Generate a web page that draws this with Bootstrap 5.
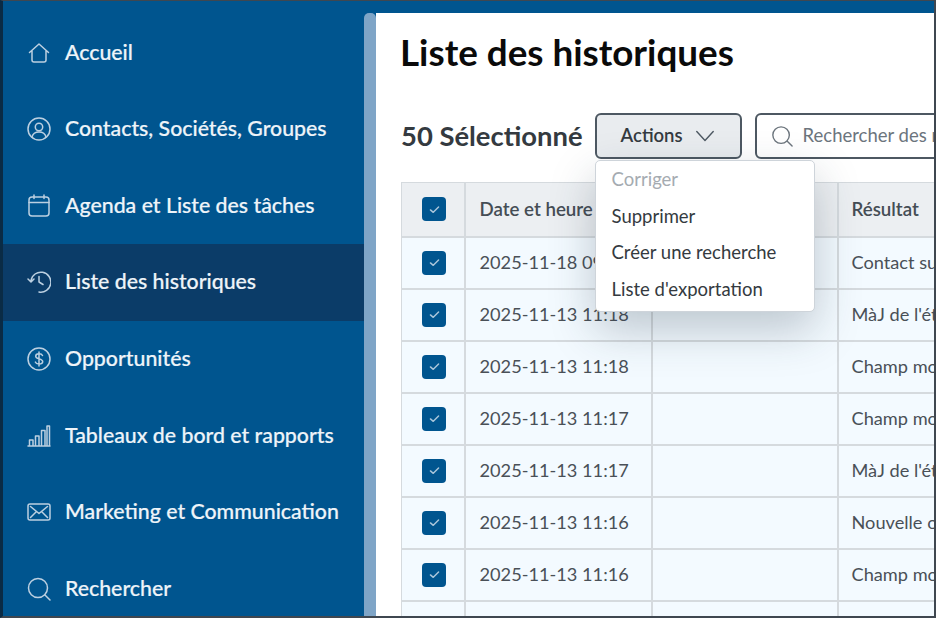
<!DOCTYPE html>
<html lang="fr">
<head>
    <meta charset="UTF-8">
    <meta name="viewport" content="width=device-width, initial-scale=1.0">
    <title>Liste des historiques</title>
    <link rel="stylesheet" href="https://cdn.jsdelivr.net/npm/bootstrap@5.3.0/dist/css/bootstrap.min.css">
    <style>
        html, body { height: 100%; overflow: hidden; }
        body { font-family: Lato, "Liberation Sans", sans-serif; background: #fff; }
        .app-frame { width: 936px; height: 618px; overflow: hidden; border-style: solid; border-width: 1px 2px 2px 3px; border-color: #3f4750 #3f4750 #3f4750 #0a2b45; }
        .side-panel { width: 361px; flex: none; background: #00558f; padding-top: 13.3px; }
        .side-link { height: 76.6px; flex: none; padding: 0 0 0 24px; gap: 14px; color: #eef4f9; font-size: 21.3px; font-weight: 500; -webkit-text-stroke: .2px #eef4f9; }
        .side-link:hover, .side-link:focus { color: #eef4f9; }
        .side-link.is-current { background: #0b3c68; }
        .side-link svg { width: 24px; height: 24px; flex: none; fill: none; stroke: #bcd0e1; stroke-width: 1.5; stroke-linecap: round; stroke-linejoin: round; }
        .scroll-strip { width: 12px; flex: none; background: #00558f; }
        .scroll-strip div { height: 100%; margin-top: 12px; background: #7fa5c7; border-radius: 5px 5px 0 0; }
        .main-pane { flex: 1; min-width: 0; overflow: hidden; border-top: 12px solid #00558f; padding-left: 25px; }
        .page-title { font-size: 36.8px; font-weight: 700; color: #0a0a0a; margin: 0 0 0 -1px; line-height: 44px; padding-top: 17px; }
        .tool-row { margin-top: 39px; height: 46px; gap: 13px; }
        .sel-count { font-size: 27.4px; font-weight: 700; color: #343a40; margin-right: -1px; white-space: nowrap; }
        .btn-actions { width: 147px; height: 46px; background: #e9ecef; border: 2px solid #4d5862; border-radius: 6px; color: #343a40; font-size: 18.5px; font-weight: 600; gap: 11px; padding: 0; }
        .btn-actions svg { width: 22px; height: 22px; fill: none; stroke: #4d5862; stroke-width: 1.5; stroke-linecap: round; stroke-linejoin: round; }
        .actions-menu { top: 100%; left: 0; margin-top: 1px !important; width: 220px; padding: 0 0 3px; border: 1px solid #ced4da; border-radius: 5px; box-shadow: 0 18px 45px rgba(33, 53, 71, .26); font-size: 18.5px; }
        .actions-menu .dropdown-item { height: 36.7px; display: flex; align-items: center; padding: 1px 16px 0; color: #343a40; }
        .actions-menu .dropdown-item.disabled { color: #a5abb1; }
        .search-box { width: 400px; height: 46px; flex: none; border: 2px solid #4d5862; border-radius: 6px; gap: 10px; padding-left: 14px; background: #fff; color: #6c757d; font-size: 18.5px; white-space: nowrap; }
        .search-box svg { width: 22px; height: 22px; flex: none; fill: none; stroke: #6c757d; stroke-width: 1.5; stroke-linecap: round; }
        .history-table { width: 800px; table-layout: fixed; margin: 23px 0 0; border-color: #d5dade; font-size: 18.2px; }
        .history-table > :not(caption) > * > * { padding: 0 14px 0 13px; height: 52px; vertical-align: middle; color: #495057; background: #f3faff; border-width: 1px 2px 2px 1px; white-space: nowrap; overflow: hidden; }
        .history-table > thead > tr > th { height: 54px; background: #eceff2; font-size: 18.7px; font-weight: 600; color: #454d55; }
        .history-table .col-check { width: 63px; padding: 0 0 0 3px; }
        .history-table td:nth-child(2), .history-table th:nth-child(2) { padding-left: 14px; }
        .tick-box { display: flex; align-items: center; justify-content: center; width: 24px; height: 24px; margin: auto; background: #00558f; border-radius: 4px; }
        .tick-box svg { width: 13px; height: 13px; fill: none; stroke: #a9c5da; stroke-width: 1.8; stroke-linecap: round; stroke-linejoin: round; }
    </style>
</head>
<body>
<div class="app-frame d-flex">

    <!-- Sidebar -->
    <nav class="side-panel nav flex-column flex-nowrap">
        <a class="nav-link side-link d-flex align-items-center" href="#">
            <svg viewBox="0 0 24 24"><path d="M2.5 11.5 12 3l9.500 8.500M5 9.500V19a2 2 0 0 0 2 2h10a2 2 0 0 0 2-2V9.500"/></svg>Accueil
        </a>
        <a class="nav-link side-link d-flex align-items-center" href="#">
            <svg viewBox="0 0 24 24"><circle cx="12" cy="12" r="11"/><circle cx="12" cy="10" r="3.700"/><path d="M5 20c.8-3.500 3-5 7-5s6.200 1.500 7 5"/></svg>Contacts, Sociétés, Groupes
        </a>
        <a class="nav-link side-link d-flex align-items-center" href="#">
            <svg viewBox="0 0 24 24"><rect x="2" y="3" width="20" height="19" rx="3"/><path d="M2 8.500h20M7 1v3.500M17 1v3.500"/></svg>Agenda et Liste des tâches
        </a>
        <a class="nav-link side-link is-current d-flex align-items-center" href="#">
            <svg viewBox="0 0 24 24"><path d="M4 10.500A10 10 0 1 1 12 22M1 9l3 3 3-3M12 6.500V12l4 2.500"/></svg>Liste des historiques
        </a>
        <a class="nav-link side-link d-flex align-items-center" href="#">
            <svg viewBox="0 0 24 24"><circle cx="12" cy="12" r="11"/><path d="M15.500 8.500c-.5-1.200-1.700-1.800-3.500-1.800-2 0-3.300 1-3.300 2.500 0 3.500 7 1.800 7 5.400 0 1.500-1.500 2.500-3.700 2.500-1.800 0-3.200-.7-3.700-2M12 5v14"/></svg>Opportunités
        </a>
        <a class="nav-link side-link d-flex align-items-center" href="#">
            <svg viewBox="0 0 24 24"><path d="M1 22h22M2.500 22v-6h3.500v6M8.500 22V12H12v10M14.500 22V6.500H18V22M20 22V2h2.500v20"/></svg>Tableaux de bord et rapports
        </a>
        <a class="nav-link side-link d-flex align-items-center" href="#">
            <svg viewBox="0 0 24 24"><rect x="1" y="4" width="22" height="16" rx="2"/><path d="m3.500 6.500 8.500 7 8.500-7M3.500 17.500l5.500-5.500M20.500 17.500 15 12"/></svg>Marketing et Communication
        </a>
        <a class="nav-link side-link d-flex align-items-center" href="#">
            <svg viewBox="0 0 24 24"><circle cx="11" cy="11" r="9.500"/><path d="m18 18 5 5"/></svg>Rechercher
        </a>
    </nav>
    <div class="scroll-strip"><div></div></div>

    <!-- Main content -->
    <main class="main-pane">
        <h1 class="page-title">Liste des historiques</h1>

        <div class="tool-row d-flex align-items-center">
            <span class="sel-count">50 Sélectionné</span>
            <div class="dropdown position-relative">
                <button class="btn btn-actions d-flex align-items-center justify-content-center" type="button">
                    Actions
                    <svg viewBox="0 0 24 24"><path d="m3 7 9 10 9-10"/></svg>
                </button>
                <ul class="dropdown-menu actions-menu show">
                    <li><a class="dropdown-item disabled" href="#">Corriger</a></li>
                    <li><a class="dropdown-item" href="#">Supprimer</a></li>
                    <li><a class="dropdown-item" href="#">Créer une recherche</a></li>
                    <li><a class="dropdown-item" href="#">Liste d'exportation</a></li>
                </ul>
            </div>
            <div class="search-box d-flex align-items-center">
                <svg viewBox="0 0 24 24"><circle cx="11" cy="11" r="9"/><path d="m18 18 5 5"/></svg>
                Rechercher des résultats
            </div>
        </div>

        <table class="table table-bordered history-table">
            <thead>
                <tr>
                    <th class="col-check"><span class="tick-box"><svg viewBox="0 0 16 16"><path d="m3 8.500 3.500 3L13 5"/></svg></span></th>
                    <th style="width:187px">Date et heure</th>
                    <th style="width:186px">Utilisateur</th>
                    <th>Résultat</th>
                </tr>
            </thead>
            <tbody id="historyRows"></tbody>
        </table>
    </main>
</div>

<script>
    // Lignes du tableau
    const rows = [
        ["2025-11-18 09:42", "Contact supprimé"],
        ["2025-11-13 11:18", "MàJ de l'étape"],
        ["2025-11-13 11:18", "Champ modifié"],
        ["2025-11-13 11:17", "Champ modifié"],
        ["2025-11-13 11:17", "MàJ de l'étape"],
        ["2025-11-13 11:16", "Nouvelle opportunité"],
        ["2025-11-13 11:16", "Champ modifié"],
        ["", ""]
    ];
    const tick = '<span class="tick-box"><svg viewBox="0 0 16 16"><path d="m3 8.500 3.500 3L13 5"/></svg></span>';
    document.getElementById("historyRows").innerHTML = rows.map(r => `
        <tr>
            <td class="col-check">${r[0] ? tick : ""}</td>
            <td>${r[0]}</td>
            <td></td>
            <td>${r[1]}</td>
        </tr>`).join("");
</script>
<script src="https://cdn.jsdelivr.net/npm/bootstrap@5.3.0/dist/js/bootstrap.bundle.min.js"></script>
</body>
</html>
